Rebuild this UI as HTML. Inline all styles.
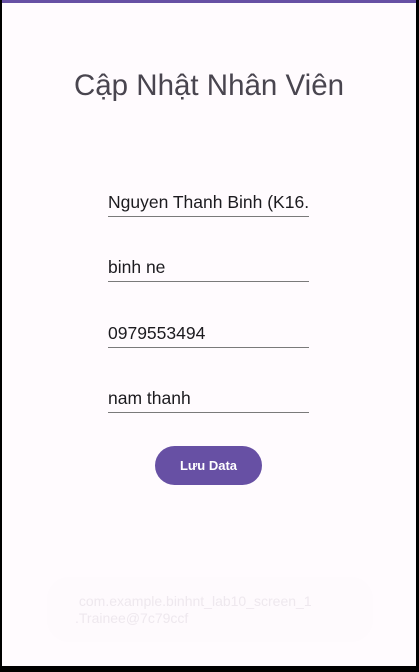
<!DOCTYPE html>
<html><head><meta charset="utf-8"><style>
html,body{margin:0;padding:0;background:#000;}
body{width:419px;height:672px;position:relative;overflow:hidden;font-family:"Liberation Sans",sans-serif;}
.screen{position:absolute;left:2px;top:0;width:414px;height:666px;background:#fffbfe;}
.bar{position:absolute;left:0;top:0;width:100%;height:3px;background:#6750a4;}
.title{position:absolute;left:0;width:100%;top:69px;text-align:center;font-size:29.5px;color:#49454f;line-height:34px;}
.f{position:absolute;left:106px;width:201px;height:25px;padding-top:5px;border-bottom:1px solid #7a7a7a;font-size:17.5px;color:#1c1b1f;white-space:nowrap;overflow:hidden;line-height:22px;}
.btn{position:absolute;left:153px;top:446px;width:107px;height:39px;border-radius:20px;background:#6750a4;color:#fff;font-size:13px;font-weight:bold;text-align:center;line-height:39px;}
.toast{position:absolute;left:45px;top:577px;width:326px;height:65px;border-radius:22px;background:#fefafd;}
.tt{position:absolute;left:73px;top:593px;font-size:14px;color:#eee8ee;line-height:17px;}
</style></head><body>
<div class="screen">
<div class="bar"></div>
<div class="title">Cập Nhật Nhân Viên</div>
<div class="f" style="top:186px;">Nguyen Thanh Binh (K16.</div>
<div class="f" style="top:251px;">binh ne</div>
<div class="f" style="top:317px;">0979553494</div>
<div class="f" style="top:382px;">nam thanh</div>
<div class="btn">Lưu Data</div>
<div class="toast"></div>
<div class="tt">&nbsp;com.example.binhnt_lab10_screen_1<br>.Trainee@7c79ccf</div>
</div>
</body></html>
